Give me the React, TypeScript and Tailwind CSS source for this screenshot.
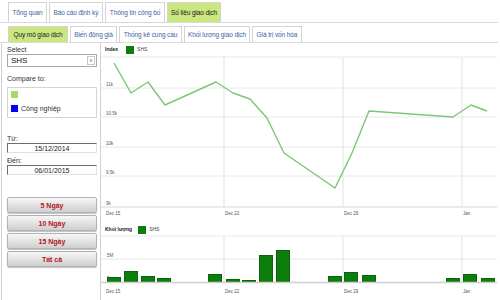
const topTabs = [
  { label: 'Tổng quan', w: 'w-[39px]' },
  { label: 'Báo cáo định kỳ', w: 'w-[54px]' },
  { label: 'Thông tin công bố', w: 'w-[60px]' },
  { label: 'Số liệu giao dịch', w: 'w-[54px]', active: true },
]

const subTabs = [
  { label: 'Quy mô giao dịch', w: 'w-[60px]', active: true },
  { label: 'Biến động giá', w: 'w-[47px]' },
  { label: 'Thống kê cung cầu', w: 'w-[63px]' },
  { label: 'Khối lượng giao dịch', w: 'w-[66px]' },
  { label: 'Giá trị vốn hóa', w: 'w-[50px]' },
]

const linePoints =
  '114,63 131,93 148,82 165,105 216,82 233,93 250,99 267,118 284,153 335,188 352,153 369,111 453,117 471,105 487,111'

const bars = [
  [107, 278], [124, 272], [141, 277], [157, 279], [208, 275], [226, 280], [242, 281], [259, 256],
  [276, 251], [328, 277], [344, 273], [362, 276], [446, 279], [463, 275], [481, 279],
]

const xTicks = [
  { x: 224, label: 'Dec 22' },
  { x: 343, label: 'Dec 29' },
  { x: 462, label: 'Jan' },
]

function Tab({ label, w, active }: { label: string; w: string; active?: boolean }) {
  return (
    <div
      className={`${w} flex items-center justify-center border border-b-0 border-[#d4d4d4] whitespace-nowrap tracking-[-0.1px] ${
        active ? 'bg-[#c9e67f] text-[#1b1b1b]' : 'bg-white text-[#3a66a3]'
      }`}
    >
      {label}
    </div>
  )
}

function DayButton({ label }: { label: string }) {
  return (
    <button className="h-[16px] w-[90px] rounded-[2px] border border-[#b3b3b3] bg-gradient-to-b from-[#f7f7f7] to-[#cfcfcf] text-[7px] font-bold text-[#b3161c] shadow-[0_1px_1px_rgba(0,0,0,0.25)]">
      {label}
    </button>
  )
}

function Legend({ title, square }: { title: string; square: string }) {
  return (
    <div className="flex h-[10px] items-center pl-[4px] text-[5px]">
      <span className="font-bold text-[#222]">{title}</span>
      <span className={`${square} h-[8px] w-[8px] bg-[#0c7d0c]`} />
      <span className="ml-[3px] text-[#444]">SHS</span>
    </div>
  )
}

export default function App() {
  return (
    <div className="h-[300px] w-[500px] overflow-hidden bg-white font-['Liberation_Sans',Arial,sans-serif]">
      <div className="mr-[2px] flex h-[23px] items-end gap-[2px] border-b border-[#d9d9d9] pl-[8px] text-[6.5px]">
        {topTabs.map((t) => (
          <div key={t.label} className="flex h-[20px]">
            <Tab {...t} />
          </div>
        ))}
      </div>
      <div className="mr-[2px] flex h-[20px] items-end gap-[2px] border-b border-[#d9d9d9] pl-[8px] text-[6.5px]">
        {subTabs.map((t) => (
          <div key={t.label} className="flex h-[16px]">
            <Tab {...t} />
          </div>
        ))}
      </div>

      <div className="flex h-[257px]">
        <aside className="ml-[1px] flex w-[100px] flex-col border-x border-[#d0d0d0] pl-[5px] pt-[2px] text-[7px] leading-[9px] text-[#333]">
          <span>Select</span>
          <div className="flex h-[13px] w-[90px] items-center justify-between border border-[#a9a9a9] pl-[3px] pr-[1px] text-[8px] text-[#111]">
            SHS
            <span className="flex h-[9px] w-[8px] items-center justify-center border border-[#c8c8c8] text-[5px] text-[#555]">
              v
            </span>
          </div>
          <span className="mt-[7px]">Compare to:</span>
          <div className="mt-[4px] flex h-[31px] w-[90px] flex-col gap-[6px] border border-[#d4d4d4] pl-[3px] pt-[3px]">
            <span className="h-[7px] w-[7px] bg-[#a8d86c]" />
            <div className="flex items-center gap-[3px]">
              <span className="h-[7px] w-[7px] bg-[#0000f5]" />
              <span>Công nghiệp</span>
            </div>
          </div>
          <span className="mt-[16px]">Từ:</span>
          <div className="flex h-[10px] w-[90px] items-center justify-center border border-t-[#6b6b6b] border-l-[#6b6b6b] border-r-[#e0e0e0] border-b-[#e0e0e0] text-[#222]">
            15/12/2014
          </div>
          <span className="mt-[3px]">Đến:</span>
          <div className="flex h-[10px] w-[90px] items-center justify-center border border-t-[#6b6b6b] border-l-[#6b6b6b] border-r-[#e0e0e0] border-b-[#e0e0e0] text-[#222]">
            06/01/2015
          </div>
          <div className="mt-[22px] flex flex-col gap-[2px]">
            <DayButton label="5 Ngày" />
            <DayButton label="10 Ngày" />
            <DayButton label="15 Ngày" />
            <DayButton label="Tất cả" />
          </div>
        </aside>

        <main className="flex flex-1 flex-col pt-[2px]">
          <Legend title="Index" square="ml-[8px]" />
          <svg width="398" height="164" viewBox="101 55 398 164" className="block">
            {[57, 88, 117, 147, 176].map((y) => (
              <line key={y} x1="101" x2="497" y1={y} y2={y} stroke="#e8e8e8" strokeWidth="1" />
            ))}
            <line x1="101" x2="497" y1="207" y2="207" stroke="#d6d6d6" strokeWidth="1" />
            {xTicks.map((t) => (
              <line key={t.x} x1={t.x} x2={t.x} y1="57" y2="207" stroke="#e2e2e2" strokeWidth="1" />
            ))}
            <g fontSize="4.5" fill="#555" fontFamily="Liberation Sans, Arial, sans-serif">
              <text x="106" y="86">11k</text>
              <text x="106" y="115">10.5k</text>
              <text x="106" y="145">10k</text>
              <text x="106" y="174">9.5k</text>
              <text x="106" y="205">9k</text>
              <text x="106" y="215">Dec 15</text>
              {xTicks.map((t) => (
                <text key={t.x} x={t.x + 1} y="215">
                  {t.label}
                </text>
              ))}
            </g>
            <polyline
              points={linePoints}
              fill="none"
              stroke="#7cc775"
              strokeWidth="1.4"
              strokeLinejoin="round"
            />
          </svg>
          <div className="mt-[6px]">
            <Legend title="Khối lượng" square="ml-[6px]" />
          </div>
          <svg width="398" height="64" viewBox="101 236 398 64" className="block">
            {[237, 260].map((y) => (
              <line key={y} x1="101" x2="497" y1={y} y2={y} stroke="#e8e8e8" strokeWidth="1" />
            ))}
            {xTicks.map((t) => (
              <line key={t.x} x1={t.x} x2={t.x} y1="237" y2="283" stroke="#e2e2e2" strokeWidth="1" />
            ))}
            {bars.map(([x, top]) => (
              <rect
                key={x}
                x={x + 0.5}
                y={top + 0.5}
                width="13"
                height={283 - top}
                fill="#0d7d0d"
                stroke="#086608"
                strokeWidth="1"
              />
            ))}
            <line x1="101" x2="497" y1="283.5" y2="283.5" stroke="#cfcfcf" strokeWidth="1.5" />
            <g fontSize="4.5" fill="#555" fontFamily="Liberation Sans, Arial, sans-serif">
              <text x="107" y="258">5M</text>
              <text x="107" y="281">0</text>
              <text x="106" y="294">Dec 15</text>
              {xTicks.map((t) => (
                <text key={t.x} x={t.x + 1} y="294">
                  {t.label}
                </text>
              ))}
            </g>
          </svg>
        </main>
      </div>
    </div>
  )
}
